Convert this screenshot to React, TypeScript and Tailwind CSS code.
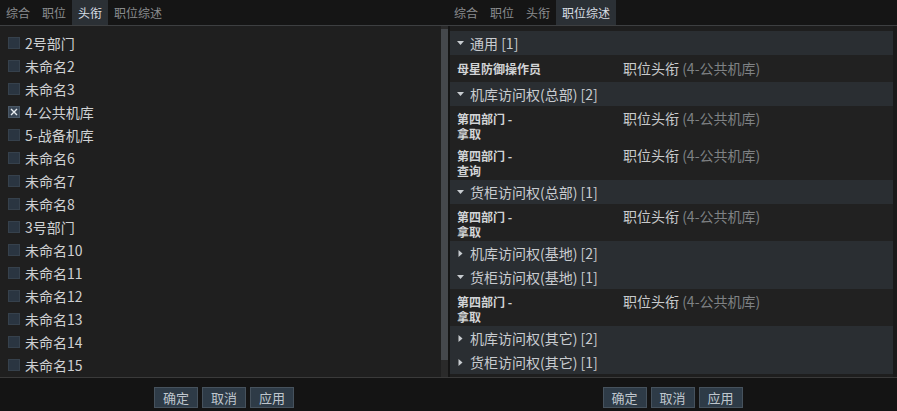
import React from "react";

const FONT = { fontFamily: '"Noto Sans CJK SC", "Noto Sans", sans-serif' };

function Tabs({ active }: { active: number }) {
  const tabs = ["综合", "职位", "头衔", "职位综述"];
  return (
    <div className="flex h-[26px] bg-[#151515] border-b border-[#3d3f41]">
      {tabs.map((t, i) => (
        <div
          key={t}
          className={
            "flex items-center px-[6px] text-[12px] leading-none " +
            (i === active ? "bg-[#2b3035] text-[#d8dee4]" : "text-[#8a8c8e]")
          }
        >
          {t}
        </div>
      ))}
    </div>
  );
}

function Buttons() {
  return (
    <div className="flex justify-center gap-[4px] pt-[9px]">
      {["确定", "取消", "应用"].map((b) => (
        <div
          key={b}
          className="flex h-[21px] w-[44px] items-center justify-center border border-[#46525d] bg-[#2e3b47] text-[13px] leading-none text-[#bfc6cd]"
        >
          {b}
        </div>
      ))}
    </div>
  );
}

const leftItems = [
  "2号部门",
  "未命名2",
  "未命名3",
  "4-公共机库",
  "5-战备机库",
  "未命名6",
  "未命名7",
  "未命名8",
  "3号部门",
  "未命名10",
  "未命名11",
  "未命名12",
  "未命名13",
  "未命名14",
  "未命名15",
];

function Check({ checked }: { checked: boolean }) {
  return (
    <div
      className={
        "flex h-[12px] w-[12px] items-center justify-center border " +
        (checked ? "border-[#4a5866] bg-[#3a4756]" : "border-[#36414c] bg-[#2a3541]")
      }
    >
      {checked && (
        <svg width="8" height="8" viewBox="0 0 8 8">
          <path d="M1 1 L7 7 M7 1 L1 7" stroke="#e8ecef" strokeWidth="1.4" />
        </svg>
      )}
    </div>
  );
}

function Down() {
  return (
    <svg width="7" height="4" viewBox="0 0 7 4" className="mr-[6px]">
      <path d="M0 0 L7 0 L3.5 4 Z" fill="#c8ccd0" />
    </svg>
  );
}
function Right() {
  return (
    <svg width="7" height="7" viewBox="0 0 7 7" className="mr-[6px]">
      <path d="M1.5 0 L5.5 3.5 L1.5 7 Z" fill="#c8ccd0" />
    </svg>
  );
}

function Header({ title, open }: { title: string; open: boolean }) {
  return (
    <div className="flex h-[24px] items-center bg-[#2a2e32] pl-[7px] text-[14px] leading-none text-[#c9ccd0]">
      {open ? <Down /> : <Right />}
      <span>{title}</span>
    </div>
  );
}

function Item({ name, tall }: { name: string; tall: boolean }) {
  return (
    <div
      className={
        "flex items-start bg-[#212121] pl-[7px] " + (tall ? "h-[37px] pt-[5px]" : "h-[27px] pt-[6px]")
      }
    >
      <div className="w-[166px]">
        <div
          className={
            "text-[12px] font-bold leading-[15px] text-[#d2d4d6] " + (tall ? "max-w-[60px]" : "")
          }
        >
          {name}
        </div>
      </div>
      <div className="text-[14px] leading-[15px] text-[#c8cacc]">
        职位头衔 <span className="text-[#7f8184]">(4-公共机库)</span>
      </div>
    </div>
  );
}

export default function App() {
  return (
    <div className="flex h-[411px] w-[897px] overflow-hidden bg-[#1f1f1f]" style={FONT}>
      {/* Left pane */}
      <div className="flex w-[448px] flex-col">
        <Tabs active={2} />
        <div className="flex h-[352px] border-b border-[#3a3a3a] bg-[#1f1f1f]">
          <div className="flex-1 pt-[5px]">
            {leftItems.map((t, i) => (
              <div key={t} className="flex h-[23px] items-center pl-[8px]">
                <Check checked={i === 3} />
                <span className="ml-[5px] text-[14px] leading-none text-[#cfd1d3]">{t}</span>
              </div>
            ))}
          </div>
          <div className="flex w-[7px] flex-col bg-[#2a2a2a] pt-[3px]">
            <div className="h-[331px] bg-[#45484c]" />
          </div>
        </div>
        <div className="flex-1 bg-[#141414]">
          <Buttons />
        </div>
      </div>
      {/* Right pane */}
      <div className="flex flex-1 flex-col">
        <Tabs active={3} />
        <div className="flex h-[352px] border-b border-[#3a3a3a] bg-[#1e1e1e]">
          <div className="w-[2px] bg-[#151515]" />
          <div className="flex-1 pt-[5px]">
            <Header title="通用 [1]" open />
            <Item name="母星防御操作员" tall={false} />
            <Header title="机库访问权(总部) [2]" open />
            <Item name="第四部门 - 拿取" tall />
            <Item name="第四部门 - 查询" tall />
            <Header title="货柜访问权(总部) [1]" open />
            <Item name="第四部门 - 拿取" tall />
            <Header title="机库访问权(基地) [2]" open={false} />
            <Header title="货柜访问权(基地) [1]" open />
            <Item name="第四部门 - 拿取" tall />
            <Header title="机库访问权(其它) [2]" open={false} />
            <Header title="货柜访问权(其它) [1]" open={false} />
          </div>
          <div className="w-[4px] bg-[#1a1a1a]" />
        </div>
        <div className="flex-1 bg-[#141414]">
          <Buttons />
        </div>
      </div>
    </div>
  );
}
